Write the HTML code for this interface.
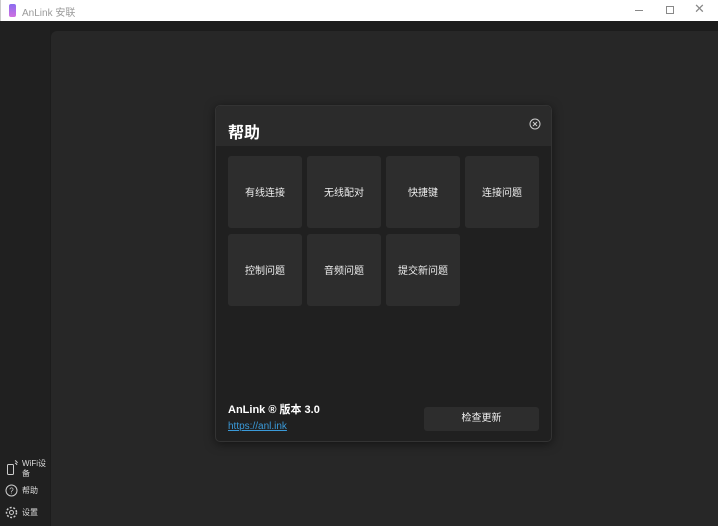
<!DOCTYPE html>
<html><head><meta charset="utf-8"><style>
*{margin:0;padding:0;box-sizing:border-box}
body{width:718px;height:526px;overflow:hidden;background:#1c1c1c;font-family:"Liberation Sans","Noto Sans CJK SC",sans-serif;position:relative;color:#fff}
.tb{position:absolute;left:0;top:0;width:718px;height:21px;background:#fff;border-left:1px solid #ccc}
.tb .t{position:absolute;left:21px;top:4px;font-size:10px;color:#999}
.logo{position:absolute;left:8px;top:4px;width:7px;height:13px;border-radius:2px;background:linear-gradient(#8a6cf0,#d070e0)}
.side{position:absolute;left:0;top:21px;width:50px;height:505px;background:#202020}
.main{position:absolute;left:51px;top:31px;width:667px;height:495px;background:#272727;border-radius:6px 0 0 0}
.si{position:absolute;font-size:8px;color:#ddd}
.dlg{position:absolute;left:215px;top:105px;width:337px;height:337px;background:#202020;border:1px solid #333;border-radius:5px;overflow:hidden;box-shadow:0 2px 10px rgba(0,0,0,.5)}
.hd{height:40px;background:#2b2b2b;position:relative}
.hd h1{position:absolute;left:12px;top:13px;font-size:16px;font-weight:bold}
.tile{position:absolute;width:74px;height:72px;background:#2d2d2d;border-radius:3px;font-size:10px;text-align:center;line-height:76px;color:#eee}
.btn{position:absolute;left:208px;top:301px;width:115px;height:24px;background:#2d2d2d;border-radius:3px;font-size:10px;text-align:center;line-height:24px;color:#eee}
</style></head><body>
<div class="tb"><div class="logo"></div><div class="t">AnLink 安联</div>
<div style="position:absolute;left:634px;top:10px;width:8px;height:1px;background:#888"></div>
<div style="position:absolute;left:665px;top:6px;width:8px;height:8px;border:1px solid #888"></div>
<div style="position:absolute;left:693px;top:1px;font-size:13px;color:#888">✕</div>
</div>
<div class="side"></div>
<div class="main"></div>
<svg style="position:absolute;left:6px;top:459px" width="12" height="16" viewBox="0 0 12 16" fill="none" stroke="#ccc" stroke-width="1"><rect x="1.5" y="5.5" width="6" height="10" rx="1"/><path d="M9 4a3 3 0 0 1 2 2M9 1.5a5 5 0 0 1 2.5 2.5"/></svg>
<div class="si" style="left:22px;top:459px;line-height:10px">WiFi设<br>备</div>
<svg style="position:absolute;left:5px;top:484px" width="13" height="13"><circle cx="6.5" cy="6.5" r="5.5" fill="none" stroke="#ccc"/><text x="6.5" y="9.5" font-size="8" fill="#ccc" text-anchor="middle" font-family="Liberation Sans">?</text></svg>
<div class="si" style="left:22px;top:485px">帮助</div>
<svg style="position:absolute;left:5px;top:506px" width="13" height="13"><circle cx="6.5" cy="6.5" r="5" fill="none" stroke="#ccc" stroke-width="1.5" stroke-dasharray="2 1.6"/><circle cx="6.5" cy="6.5" r="2" fill="none" stroke="#ccc"/></svg>
<div class="si" style="left:22px;top:507px">设置</div>
<div class="dlg">
<div class="hd"><h1>帮助</h1>
<svg style="position:absolute;left:313px;top:12px" width="12" height="12"><circle cx="6" cy="6" r="5" fill="none" stroke="#ccc"/><path d="M4 4l4 4M8 4l-4 4" stroke="#ccc"/></svg></div>
<div class="tile" style="left:12px;top:50px">有线连接</div>
<div class="tile" style="left:91px;top:50px">无线配对</div>
<div class="tile" style="left:170px;top:50px">快捷键</div>
<div class="tile" style="left:249px;top:50px">连接问题</div>
<div class="tile" style="left:12px;top:128px">控制问题</div>
<div class="tile" style="left:91px;top:128px">音频问题</div>
<div class="tile" style="left:170px;top:128px">提交新问题</div>
<div style="position:absolute;left:12px;top:295px;font-size:11px;font-weight:bold">AnLink ® 版本 3.0</div>
<div style="position:absolute;left:12px;top:315px;font-size:10px;color:#3a9ad9;text-decoration:underline">https://anl.ink</div>
<div class="btn">检查更新</div>
</div>
</body></html>
